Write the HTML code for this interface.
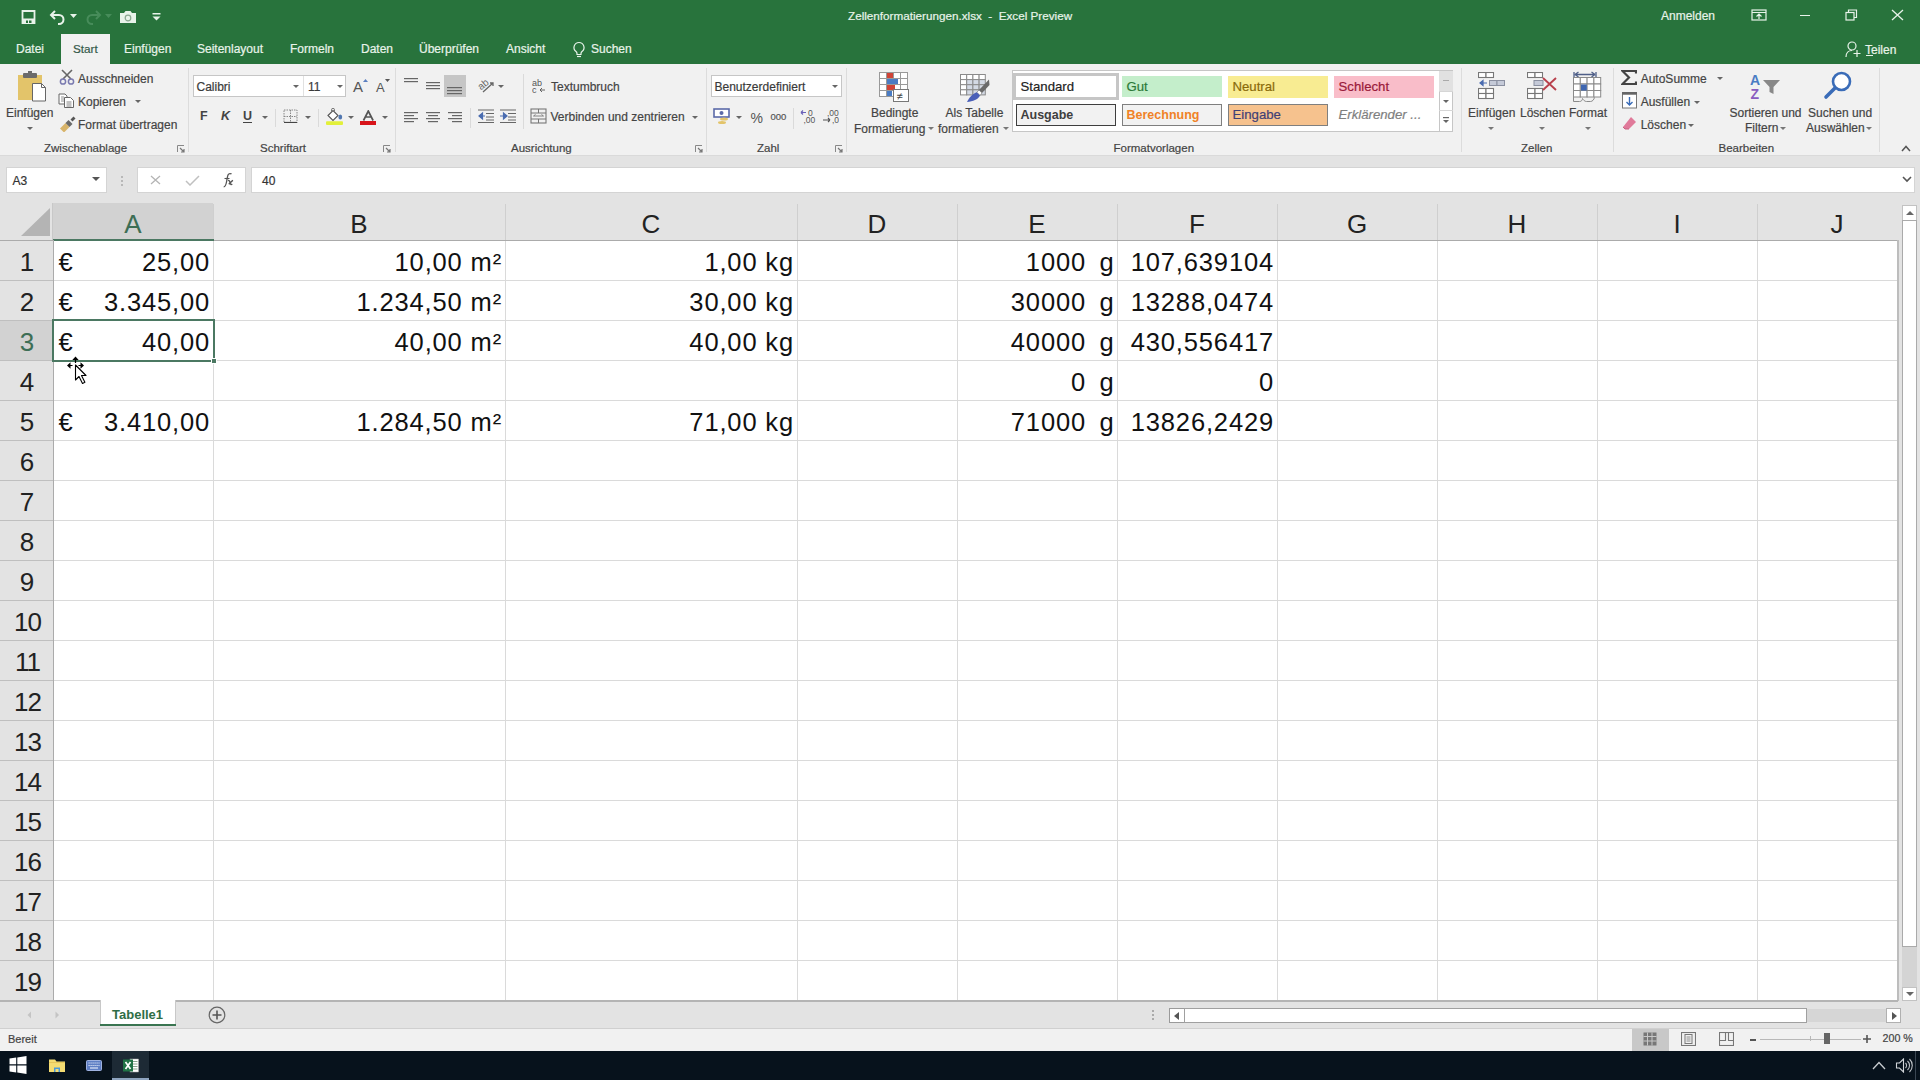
<!DOCTYPE html>
<html><head><meta charset="utf-8"><style>
html,body{margin:0;padding:0;width:1920px;height:1080px;overflow:hidden;background:#fff;}
body{position:relative;font-family:"Liberation Sans",sans-serif;}
body>div{position:absolute;white-space:pre;}
.u{-webkit-text-stroke:0.2px currentColor;}
</style></head><body>
<div style="left:0px;top:0px;width:1920px;height:64px;background:#28733c"></div>
<svg style="position:absolute;left:20px;top:9px;" width="17" height="16" viewBox="0 0 17 16"><path d="M2.5 2h12v12h-12z" fill="none" stroke="#e8f3ea" stroke-width="1.8"/><rect x="2.5" y="9.5" width="12" height="4.5" fill="#e8f3ea"/><rect x="6" y="11.5" width="2" height="2.5" fill="#28733c"/><rect x="9" y="11.5" width="2.5" height="2.5" fill="#28733c"/></svg>
<svg style="position:absolute;left:49px;top:9px;" width="18" height="17" viewBox="0 0 18 17"><path d="M3 6h7a4.5 4.5 0 0 1 0 9h-1" fill="none" stroke="#e8f3ea" stroke-width="2"/><path d="M6 2L2 6l4 4" fill="none" stroke="#e8f3ea" stroke-width="2"/></svg>
<svg style="position:absolute;left:70px;top:14px;" width="7" height="4" viewBox="0 0 7 4"><path d="M0 0h7L3.5 4z" fill="#e8f3ea"/></svg>
<svg style="position:absolute;left:85px;top:9px;" width="17" height="17" viewBox="0 0 17 17"><path d="M14 6H7a4.5 4.5 0 0 0 0 9h1" fill="none" stroke="#478c5a" stroke-width="2"/><path d="M11 2l4 4-4 4" fill="none" stroke="#478c5a" stroke-width="2"/></svg>
<svg style="position:absolute;left:105px;top:14px;" width="7" height="4" viewBox="0 0 7 4"><path d="M0 0h7L3.5 4z" fill="#478c5a"/></svg>
<svg style="position:absolute;left:119px;top:10px;" width="18" height="14" viewBox="0 0 18 14"><path d="M1 3h4l1.5-2h5L13 3h4v10H1z" fill="#e8f3ea"/><circle cx="9" cy="8" r="2.8" fill="none" stroke="#8aa890" stroke-width="1.2"/></svg>
<svg style="position:absolute;left:152px;top:13px;" width="9" height="8" viewBox="0 0 9 8"><rect x="0.5" y="0" width="8" height="1.5" fill="#e8f3ea"/><path d="M0.5 3.5h8L4.5 7.5z" fill="#e8f3ea"/></svg>
<div class="u" style="left:848.00px;top:10.10px;font-size:11.7px;line-height:11.7px;color:#e8f3ea;font-weight:400;">Zellenformatierungen.xlsx  -  Excel Preview</div>
<div class="u" style="left:1661.00px;top:9.54px;font-size:12px;line-height:12px;color:#e8f3ea;font-weight:400;">Anmelden</div>
<svg style="position:absolute;left:1751px;top:9px;" width="16" height="12" viewBox="0 0 16 12"><rect x="1" y="1" width="14" height="10" fill="none" stroke="#e8f3ea" stroke-width="1.2"/><path d="M1 3.5h14" stroke="#e8f3ea" stroke-width="1"/><path d="M8 10V5M5.5 7.5L8 5l2.5 2.5" fill="none" stroke="#e8f3ea" stroke-width="1.2"/></svg>
<div style="left:1800px;top:15px;width:10px;height:1.3px;background:#e8f3ea"></div>
<svg style="position:absolute;left:1845px;top:9px;" width="13" height="12" viewBox="0 0 13 12"><rect x="1" y="3.5" width="8" height="7.5" fill="none" stroke="#e8f3ea" stroke-width="1.2"/><path d="M3.5 3.5V1h8v7.5H9" fill="none" stroke="#e8f3ea" stroke-width="1.2"/></svg>
<svg style="position:absolute;left:1891px;top:9px;" width="13" height="12" viewBox="0 0 13 12"><path d="M1 1l11 10M12 1L1 11" stroke="#e8f3ea" stroke-width="1.3"/></svg>
<div style="left:61px;top:34px;width:49px;height:30px;background:#f1f1f1"></div>
<div class="u" style="left:16.00px;top:42.84px;font-size:12px;line-height:12px;color:#e8f3ea;font-weight:400;">Datei</div>
<div class="u" style="left:73.00px;top:43.10px;font-size:11.7px;line-height:11.7px;color:#34594a;font-weight:400;">Start</div>
<div class="u" style="left:124.00px;top:42.84px;font-size:12px;line-height:12px;color:#e8f3ea;font-weight:400;">Einfügen</div>
<div class="u" style="left:197.00px;top:42.84px;font-size:12px;line-height:12px;color:#e8f3ea;font-weight:400;">Seitenlayout</div>
<div class="u" style="left:290.00px;top:42.84px;font-size:12px;line-height:12px;color:#e8f3ea;font-weight:400;">Formeln</div>
<div class="u" style="left:361.00px;top:42.84px;font-size:12px;line-height:12px;color:#e8f3ea;font-weight:400;">Daten</div>
<div class="u" style="left:419.00px;top:42.84px;font-size:12px;line-height:12px;color:#e8f3ea;font-weight:400;">Überprüfen</div>
<div class="u" style="left:506.00px;top:42.84px;font-size:12px;line-height:12px;color:#e8f3ea;font-weight:400;">Ansicht</div>
<div class="u" style="left:591.00px;top:42.84px;font-size:12px;line-height:12px;color:#e8f3ea;font-weight:400;">Suchen</div>
<svg style="position:absolute;left:572px;top:41px;" width="14" height="17" viewBox="0 0 14 17"><path d="M7 1.5a5 5 0 0 0-3 9c.6.5 1 1.3 1 2v1h4v-1c0-.7.4-1.5 1-2a5 5 0 0 0-3-9z" fill="none" stroke="#e8f3ea" stroke-width="1.2"/><path d="M5 15.5h4" stroke="#e8f3ea" stroke-width="1.2"/></svg>
<svg style="position:absolute;left:1845px;top:41px;" width="17" height="17" viewBox="0 0 17 17"><circle cx="7" cy="5" r="4" fill="none" stroke="#e8f3ea" stroke-width="1.2"/><path d="M1 16c0-4 2.5-6.5 6-6.5" fill="none" stroke="#e8f3ea" stroke-width="1.2"/><path d="M12 9v7M8.5 12.5h7" stroke="#e8f3ea" stroke-width="1.2"/></svg>
<div class="u" style="left:1865.00px;top:43.54px;font-size:12px;line-height:12px;color:#e8f3ea;font-weight:400;">Teilen</div>
<div style="left:1866px;top:55px;width:7px;height:1px;background:#e8f3ea"></div>
<div style="left:0px;top:64px;width:1920px;height:92px;background:#f1f1f1"></div>
<div style="left:188px;top:68px;width:1px;height:84px;background:#dcdcdc"></div>
<div style="left:395px;top:68px;width:1px;height:84px;background:#dcdcdc"></div>
<div style="left:706px;top:68px;width:1px;height:84px;background:#dcdcdc"></div>
<div style="left:846px;top:68px;width:1px;height:84px;background:#dcdcdc"></div>
<div style="left:1461px;top:68px;width:1px;height:84px;background:#dcdcdc"></div>
<div style="left:1613px;top:68px;width:1px;height:84px;background:#dcdcdc"></div>
<div style="left:1879px;top:68px;width:1px;height:84px;background:#dcdcdc"></div>
<svg style="position:absolute;left:16px;top:71px;" width="31" height="32" viewBox="0 0 31 32"><rect x="2" y="4" width="24" height="25" fill="#e3c46a"/><rect x="7" y="2" width="14" height="5" rx="1" fill="#6b6b6b"/><rect x="12" y="0" width="4" height="3" fill="#6b6b6b"/><path d="M16.5 12.5h9l4 4v13.5h-13z" fill="#fff" stroke="#666" stroke-width="1"/><path d="M25.5 12.5v4h4" fill="none" stroke="#666" stroke-width="1"/></svg>
<div class="u" style="left:6.00px;top:106.84px;font-size:12px;line-height:12px;color:#444444;font-weight:400;">Einfügen</div>
<svg style="position:absolute;left:26.5px;top:126.5px;" width="6" height="3.0" viewBox="0 0 6 3.0"><path d="M0 0h6L3.0 3.0z" fill="#666"/></svg>
<svg style="position:absolute;left:59px;top:69px;" width="16" height="16" viewBox="0 0 16 16"><path d="M3 1l9 9M13 1L4 10" stroke="#666" stroke-width="1.6"/><circle cx="4" cy="12.5" r="2.6" fill="none" stroke="#7a7ab0" stroke-width="1.5"/><circle cx="12" cy="12.5" r="2.6" fill="none" stroke="#7a7ab0" stroke-width="1.5"/></svg>
<div class="u" style="left:78.00px;top:73.14px;font-size:12px;line-height:12px;color:#444444;font-weight:400;">Ausschneiden</div>
<svg style="position:absolute;left:58px;top:93px;" width="17" height="15" viewBox="0 0 17 15"><path d="M1 1h6l2 2v8H1z" fill="#fff" stroke="#666" stroke-width="1"/><path d="M3 4h3M3 6h4M3 8h4" stroke="#777" stroke-width="0.8"/><path d="M6.5 4.5h6l3 3v7h-9z" fill="#fff" stroke="#666" stroke-width="1"/><path d="M8.5 9h5M8.5 11h5M8.5 13h5" stroke="#777" stroke-width="0.9"/></svg>
<div class="u" style="left:78.00px;top:95.54px;font-size:12px;line-height:12px;color:#444444;font-weight:400;">Kopieren</div>
<svg style="position:absolute;left:134.5px;top:100.0px;" width="6" height="3.0" viewBox="0 0 6 3.0"><path d="M0 0h6L3.0 3.0z" fill="#666"/></svg>
<svg style="position:absolute;left:59px;top:116px;" width="17" height="16" viewBox="0 0 17 16"><path d="M1 12.5L6.5 7l4 4L5 16.5z" fill="#d8b46a"/><path d="M6.5 7l3-3 4 4-3 3z" fill="#6a6a6a"/><path d="M11.5 3.5l3-3 2 2-3 3z" fill="#555"/></svg>
<div class="u" style="left:78.00px;top:118.84px;font-size:12px;line-height:12px;color:#444444;font-weight:400;">Format übertragen</div>
<div class="u" style="left:44.00px;top:142.97px;font-size:11.5px;line-height:11.5px;color:#444444;font-weight:400;">Zwischenablage</div>
<svg style="position:absolute;left:177px;top:145px;" width="8" height="8" viewBox="0 0 8 8"><path d="M0.5 7V0.5H7" fill="none" stroke="#888" stroke-width="1"/><path d="M3 3l4 4M7 4v3H4" fill="none" stroke="#777" stroke-width="1.2"/></svg>
<div style="left:193px;top:75px;width:153px;height:22px;background:#fff;border:1px solid #c6c6c6;box-sizing:border-box"></div>
<div style="left:303px;top:76px;width:1px;height:20px;background:#e1e1e1"></div>
<div class="u" style="left:196.50px;top:80.84px;font-size:12px;line-height:12px;color:#3a3a3a;font-weight:400;">Calibri</div>
<svg style="position:absolute;left:293.0px;top:85.0px;" width="6" height="3.0" viewBox="0 0 6 3.0"><path d="M0 0h6L3.0 3.0z" fill="#666"/></svg>
<div class="u" style="left:308.00px;top:80.84px;font-size:12px;line-height:12px;color:#3a3a3a;font-weight:400;">11</div>
<svg style="position:absolute;left:336.5px;top:85.0px;" width="6" height="3.0" viewBox="0 0 6 3.0"><path d="M0 0h6L3.0 3.0z" fill="#666"/></svg>
<svg style="position:absolute;left:352px;top:78px;" width="16" height="15" viewBox="0 0 16 15"><text x="1" y="14" font-family="Liberation Sans" font-size="15" fill="#555">A</text><path d="M11 4l2.5-3 2.5 3z" fill="#5b7fc0"/></svg>
<svg style="position:absolute;left:375px;top:78px;" width="15" height="15" viewBox="0 0 15 15"><text x="1" y="14" font-family="Liberation Sans" font-size="13" fill="#555">A</text><path d="M10 1h5l-2.5 3z" fill="#555"/></svg>
<div style="left:200.00px;top:110.42px;font-size:12.5px;line-height:12.5px;color:#444;font-weight:700;">F</div>
<div style="left:221.00px;top:110.42px;font-size:12.5px;line-height:12.5px;color:#444;font-weight:700;font-style:italic">K</div>
<div style="left:243.00px;top:110.42px;font-size:12.5px;line-height:12.5px;color:#444;font-weight:700;">U</div>
<div style="left:243px;top:122px;width:9px;height:1.2px;background:#444"></div>
<svg style="position:absolute;left:261.5px;top:116.0px;" width="6" height="3.0" viewBox="0 0 6 3.0"><path d="M0 0h6L3.0 3.0z" fill="#666"/></svg>
<div style="left:275px;top:109px;width:1px;height:18px;background:#dadada"></div>
<svg style="position:absolute;left:283px;top:109px;" width="15" height="14" viewBox="0 0 15 14"><path d="M1 1h13v13H1zM7.5 1v13M1 7.5h13" fill="none" stroke="#888" stroke-width="1" stroke-dasharray="1.5 1"/><path d="M1 13.5h13" stroke="#444" stroke-width="1.2"/></svg>
<svg style="position:absolute;left:304.5px;top:116.0px;" width="6" height="3.0" viewBox="0 0 6 3.0"><path d="M0 0h6L3.0 3.0z" fill="#666"/></svg>
<div style="left:318px;top:109px;width:1px;height:18px;background:#dadada"></div>
<svg style="position:absolute;left:324px;top:108px;" width="20" height="18" viewBox="0 0 20 18"><path d="M4 7.5L9 2.5l5 5-5 5z" fill="#fff" stroke="#555" stroke-width="1.1"/><path d="M7.5 4V1.8a1.5 1.5 0 0 1 3 0V4" fill="none" stroke="#777" stroke-width="1"/><ellipse cx="16.3" cy="9" rx="1.9" ry="2.6" fill="#5177b0"/><rect x="2" y="13.3" width="17" height="3.7" rx="1" fill="#e2f03a"/></svg>
<svg style="position:absolute;left:347.5px;top:116.0px;" width="6" height="3.0" viewBox="0 0 6 3.0"><path d="M0 0h6L3.0 3.0z" fill="#666"/></svg>
<svg style="position:absolute;left:362px;top:110px;" width="13" height="11" viewBox="0 0 13 11"><path d="M1.5 10.5L6.3 1l4.8 9.5M3.3 7h6" fill="none" stroke="#555" stroke-width="1.7"/></svg>
<div style="left:360px;top:121px;width:16px;height:4px;background:#d8141a"></div>
<svg style="position:absolute;left:381.5px;top:116.0px;" width="6" height="3.0" viewBox="0 0 6 3.0"><path d="M0 0h6L3.0 3.0z" fill="#666"/></svg>
<div class="u" style="left:260.00px;top:143.47px;font-size:11.5px;line-height:11.5px;color:#444444;font-weight:400;">Schriftart</div>
<svg style="position:absolute;left:383px;top:145px;" width="8" height="8" viewBox="0 0 8 8"><path d="M0.5 7V0.5H7" fill="none" stroke="#888" stroke-width="1"/><path d="M3 3l4 4M7 4v3H4" fill="none" stroke="#777" stroke-width="1.2"/></svg>
<svg style="position:absolute;left:404px;top:78px;" width="14" height="9" viewBox="0 0 14 9"><rect x="0" y="0" width="14" height="1.2" fill="#666"/><rect x="0" y="3" width="14" height="1.2" fill="#666"/><rect x="0" y="6" width="0" height="1.2" fill="#666"/></svg>
<svg style="position:absolute;left:426px;top:82px;" width="14" height="9" viewBox="0 0 14 9"><rect x="0" y="0" width="14" height="1.2" fill="#666"/><rect x="0" y="3" width="14" height="1.2" fill="#666"/><rect x="0" y="6" width="14" height="1.2" fill="#666"/></svg>
<div style="left:444px;top:75px;width:22px;height:22px;background:#c6c6c6"></div>
<svg style="position:absolute;left:447px;top:87px;" width="15" height="9" viewBox="0 0 15 9"><rect x="0" y="0" width="15" height="1.2" fill="#666"/><rect x="0" y="3" width="15" height="1.2" fill="#666"/><rect x="0" y="6" width="15" height="1.2" fill="#666"/></svg>
<svg style="position:absolute;left:477px;top:77px;" width="18" height="16" viewBox="0 0 18 16"><text x="1" y="11" font-family="Liberation Sans" font-size="10" fill="#666" transform="rotate(-40 6 8)">ab</text><path d="M6 15l10-9M13 6h3v3" fill="none" stroke="#666" stroke-width="1.3"/></svg>
<svg style="position:absolute;left:498.0px;top:84.5px;" width="6" height="3.0" viewBox="0 0 6 3.0"><path d="M0 0h6L3.0 3.0z" fill="#666"/></svg>
<div style="left:523px;top:74px;width:1px;height:55px;background:#dadada"></div>
<svg style="position:absolute;left:532px;top:78px;" width="15" height="16" viewBox="0 0 15 16"><text x="0" y="8" font-family="Liberation Sans" font-size="9" fill="#555">ab</text><text x="0" y="15" font-family="Liberation Sans" font-size="9" fill="#555">c</text><path d="M8 12h5M8 12l2-2M8 12l2 2" fill="none" stroke="#555" stroke-width="0.9"/></svg>
<div class="u" style="left:551.00px;top:80.54px;font-size:12px;line-height:12px;color:#444444;font-weight:400;">Textumbruch</div>
<svg style="position:absolute;left:404px;top:112px;" width="14" height="12" viewBox="0 0 14 12"><rect x="0" y="0" width="14" height="1.2" fill="#666"/><rect x="0" y="3" width="10" height="1.2" fill="#666"/><rect x="0" y="6" width="14" height="1.2" fill="#666"/><rect x="0" y="9" width="10" height="1.2" fill="#666"/></svg>
<svg style="position:absolute;left:426px;top:112px;" width="14" height="12" viewBox="0 0 14 12"><rect x="0" y="0" width="14" height="1.2" fill="#666"/><rect x="2" y="3" width="10" height="1.2" fill="#666"/><rect x="0" y="6" width="14" height="1.2" fill="#666"/><rect x="2" y="9" width="10" height="1.2" fill="#666"/></svg>
<svg style="position:absolute;left:448px;top:112px;" width="14" height="12" viewBox="0 0 14 12"><rect x="0" y="0" width="14" height="1.2" fill="#666"/><rect x="4" y="3" width="10" height="1.2" fill="#666"/><rect x="0" y="6" width="14" height="1.2" fill="#666"/><rect x="4" y="9" width="10" height="1.2" fill="#666"/></svg>
<div style="left:470px;top:108px;width:1px;height:20px;background:#dadada"></div>
<svg style="position:absolute;left:478px;top:109px;" width="17" height="14" viewBox="0 0 17 14"><path d="M0 1h16M8 4.5h8M8 8h8M8 11h8M0 13.5h16" stroke="#666" stroke-width="1"/><path d="M1 7h6M1 7l3.5-3v6z" fill="#4a6cb0" stroke="#4a6cb0" stroke-width="1.2"/></svg>
<svg style="position:absolute;left:500px;top:109px;" width="17" height="14" viewBox="0 0 17 14"><path d="M0 1h16M8 4.5h8M8 8h8M8 11h8M0 13.5h16" stroke="#666" stroke-width="1"/><path d="M0 7h5M7 7l-3.5-3v6z" fill="#4a6cb0" stroke="#4a6cb0" stroke-width="1.2"/></svg>
<svg style="position:absolute;left:530px;top:108px;" width="17" height="16" viewBox="0 0 17 16"><rect x="1" y="1" width="15" height="14" fill="none" stroke="#777" stroke-width="1.1"/><path d="M1 5h15M1 11h15M8.5 1v4M8.5 11v4" stroke="#777" stroke-width="1"/><path d="M3.5 8h10M3.5 8l2-1.5M13.5 8l-2-1.5" fill="none" stroke="#777" stroke-width="0.9"/></svg>
<div class="u" style="left:550.50px;top:111.34px;font-size:12px;line-height:12px;color:#444444;font-weight:400;">Verbinden und zentrieren</div>
<svg style="position:absolute;left:691.5px;top:116.0px;" width="6" height="3.0" viewBox="0 0 6 3.0"><path d="M0 0h6L3.0 3.0z" fill="#666"/></svg>
<div class="u" style="left:511.00px;top:143.47px;font-size:11.5px;line-height:11.5px;color:#444444;font-weight:400;">Ausrichtung</div>
<svg style="position:absolute;left:695px;top:145px;" width="8" height="8" viewBox="0 0 8 8"><path d="M0.5 7V0.5H7" fill="none" stroke="#888" stroke-width="1"/><path d="M3 3l4 4M7 4v3H4" fill="none" stroke="#777" stroke-width="1.2"/></svg>
<div style="left:711px;top:75px;width:131px;height:22px;background:#fff;border:1px solid #c6c6c6;box-sizing:border-box"></div>
<div class="u" style="left:714.50px;top:80.54px;font-size:12px;line-height:12px;color:#3a3a3a;font-weight:400;">Benutzerdefiniert</div>
<svg style="position:absolute;left:831.5px;top:84.5px;" width="6" height="3.0" viewBox="0 0 6 3.0"><path d="M0 0h6L3.0 3.0z" fill="#666"/></svg>
<svg style="position:absolute;left:713px;top:108px;" width="19" height="17" viewBox="0 0 19 17"><rect x="1" y="1" width="15" height="8" fill="#fff" stroke="#5b6aa8" stroke-width="1.6"/><circle cx="8.5" cy="5" r="2" fill="#5b6aa8"/><ellipse cx="11" cy="11" rx="4" ry="1.5" fill="#e3c46a"/><ellipse cx="9" cy="14.5" rx="4" ry="1.5" fill="#e3c46a"/></svg>
<svg style="position:absolute;left:735.5px;top:116.0px;" width="6" height="3.0" viewBox="0 0 6 3.0"><path d="M0 0h6L3.0 3.0z" fill="#666"/></svg>
<div style="left:750.50px;top:110.65px;font-size:14px;line-height:14px;color:#555;font-weight:400;">%</div>
<div class="u" style="left:770.50px;top:112.16px;font-size:9.5px;line-height:9.5px;color:#555;font-weight:400;">000</div>
<div style="left:793px;top:108px;width:1px;height:21px;background:#dadada"></div>
<svg style="position:absolute;left:800px;top:108px;" width="17" height="17" viewBox="0 0 17 17"><text x="8" y="8" font-family="Liberation Sans" font-size="8.5" fill="#555">0</text><text x="3.5" y="15" font-family="Liberation Sans" font-size="8.5" fill="#555">,00</text><path d="M1 4.5h5M1 4.5l2-2M1 4.5l2 2" stroke="#6a60b8" stroke-width="1.2" fill="none"/></svg>
<svg style="position:absolute;left:822px;top:108px;" width="17" height="17" viewBox="0 0 17 17"><text x="5" y="8" font-family="Liberation Sans" font-size="8.5" fill="#555">,00</text><text x="10" y="15" font-family="Liberation Sans" font-size="8.5" fill="#555">,0</text><path d="M1 12h7M8 12l-2-2M8 12l-2 2" stroke="#555" stroke-width="1.1" fill="none"/></svg>
<div class="u" style="left:757.00px;top:143.07px;font-size:11.5px;line-height:11.5px;color:#444444;font-weight:400;">Zahl</div>
<svg style="position:absolute;left:835px;top:145px;" width="8" height="8" viewBox="0 0 8 8"><path d="M0.5 7V0.5H7" fill="none" stroke="#888" stroke-width="1"/><path d="M3 3l4 4M7 4v3H4" fill="none" stroke="#777" stroke-width="1.2"/></svg>
<svg style="position:absolute;left:879px;top:72px;" width="31" height="31" viewBox="0 0 31 31"><g stroke="#999" stroke-width="1" fill="#fff"><rect x="0.5" y="0.5" width="7" height="6"/><rect x="7.5" y="0.5" width="7" height="6"/><rect x="14.5" y="0.5" width="7" height="6"/><rect x="21.5" y="0.5" width="7" height="6"/><rect x="0.5" y="6.5" width="7" height="6"/><rect x="7.5" y="6.5" width="7" height="6"/><rect x="14.5" y="6.5" width="7" height="6"/><rect x="21.5" y="6.5" width="7" height="6"/><rect x="0.5" y="12.5" width="7" height="6"/><rect x="7.5" y="12.5" width="7" height="6"/><rect x="14.5" y="12.5" width="7" height="6"/><rect x="21.5" y="12.5" width="7" height="6"/><rect x="0.5" y="18.5" width="7" height="6"/><rect x="7.5" y="18.5" width="7" height="6"/><rect x="14.5" y="18.5" width="7" height="6"/><rect x="21.5" y="18.5" width="7" height="6"/></g><rect x="8" y="1" width="6" height="5" fill="#d04437"/><rect x="8" y="7" width="11" height="5" fill="#4a7cc4"/><rect x="8" y="13" width="8" height="5" fill="#d04437"/><rect x="8" y="19" width="5" height="5" fill="#4a7cc4"/><rect x="14.5" y="17.5" width="15" height="12" fill="#fff" stroke="#777" stroke-width="1"/><text x="17.5" y="28" font-family="Liberation Sans" font-size="11" fill="#444">≠</text></svg>
<div class="u" style="left:871.00px;top:106.84px;font-size:12px;line-height:12px;color:#444444;font-weight:400;">Bedingte</div>
<div class="u" style="left:854.00px;top:122.84px;font-size:12px;line-height:12px;color:#444444;font-weight:400;">Formatierung</div>
<svg style="position:absolute;left:928.0px;top:127.0px;" width="6" height="3.0" viewBox="0 0 6 3.0"><path d="M0 0h6L3.0 3.0z" fill="#777"/></svg>
<svg style="position:absolute;left:958px;top:72px;" width="34" height="32" viewBox="0 0 34 32"><g stroke="#8a8a8a" stroke-width="1"><rect x="2.5" y="2.5" width="6.2" height="5.1" fill="#fff"/><rect x="8.7" y="2.5" width="6.2" height="5.1" fill="#fff"/><rect x="14.9" y="2.5" width="6.2" height="5.1" fill="#fff"/><rect x="21.1" y="2.5" width="6.2" height="5.1" fill="#fff"/><rect x="2.5" y="7.6" width="6.2" height="5.1" fill="#fff"/><rect x="8.7" y="7.6" width="6.2" height="5.1" fill="#d3d9e4"/><rect x="14.9" y="7.6" width="6.2" height="5.1" fill="#d3d9e4"/><rect x="21.1" y="7.6" width="6.2" height="5.1" fill="#d3d9e4"/><rect x="2.5" y="12.7" width="6.2" height="5.1" fill="#fff"/><rect x="8.7" y="12.7" width="6.2" height="5.1" fill="#d3d9e4"/><rect x="14.9" y="12.7" width="6.2" height="5.1" fill="#d3d9e4"/><rect x="21.1" y="12.7" width="6.2" height="5.1" fill="#d3d9e4"/><rect x="2.5" y="17.799999999999997" width="6.2" height="5.1" fill="#fff"/><rect x="8.7" y="17.799999999999997" width="6.2" height="5.1" fill="#d3d9e4"/><rect x="14.9" y="17.799999999999997" width="6.2" height="5.1" fill="#d3d9e4"/><rect x="21.1" y="17.799999999999997" width="6.2" height="5.1" fill="#d3d9e4"/></g><path d="M31 7.5L31.5 13 24 21 21 18z" fill="#6a6a6a"/><path d="M21 18L24 21 22 23.5 18.8 20.3z" fill="#fff" stroke="#888" stroke-width="0.8"/><path d="M18.8 20.3L22 23.5C20 27.5 15 29.5 9 30 11 26 14 22 18.8 20.3z" fill="#4a5fb8"/></svg>
<div class="u" style="left:945.50px;top:106.84px;font-size:12px;line-height:12px;color:#444444;font-weight:400;">Als Tabelle</div>
<div class="u" style="left:938.00px;top:122.84px;font-size:12px;line-height:12px;color:#444444;font-weight:400;">formatieren</div>
<svg style="position:absolute;left:1003.0px;top:127.0px;" width="6" height="3.0" viewBox="0 0 6 3.0"><path d="M0 0h6L3.0 3.0z" fill="#777"/></svg>
<div style="left:1012px;top:70px;width:441px;height:62px;background:#fff;border:1px solid #c6c6c6;box-sizing:border-box"></div>
<div style="left:1013px;top:73px;width:106px;height:27px;background:#fff;border:3px solid #c6c6c6;box-sizing:border-box"></div>
<div class="u" style="left:1020.50px;top:80.43px;font-size:13.2px;line-height:13.2px;color:#222;font-weight:400;">Standard</div>
<div style="left:1122px;top:76px;width:100px;height:21px;background:#c4eecb"></div>
<div class="u" style="left:1126.50px;top:80.43px;font-size:13.2px;line-height:13.2px;color:#2c7a38;font-weight:400;">Gut</div>
<div style="left:1228px;top:76px;width:100px;height:21.5px;background:#f8ec92"></div>
<div class="u" style="left:1232.50px;top:80.43px;font-size:13.2px;line-height:13.2px;color:#8a6a0a;font-weight:400;">Neutral</div>
<div style="left:1334px;top:76px;width:100px;height:21.5px;background:#f9bdc9"></div>
<div class="u" style="left:1338.50px;top:80.43px;font-size:13.2px;line-height:13.2px;color:#9a1a3a;font-weight:400;">Schlecht</div>
<div style="left:1016px;top:104px;width:100px;height:22px;background:#f2f2f2;border:1.5px solid #3f3f3f;box-sizing:border-box"></div>
<div style="left:1020.50px;top:108.92px;font-size:12.5px;line-height:12.5px;color:#3f3f3f;font-weight:700;">Ausgabe</div>
<div style="left:1122px;top:104px;width:100px;height:22px;background:#f2f2f2;border:1px solid #7f7f7f;box-sizing:border-box"></div>
<div style="left:1126.50px;top:108.92px;font-size:12.5px;line-height:12.5px;color:#f08226;font-weight:700;">Berechnung</div>
<div style="left:1228px;top:104px;width:100px;height:22px;background:#f6c28e;border:1px solid #7f7f7f;box-sizing:border-box"></div>
<div class="u" style="left:1232.50px;top:108.33px;font-size:13.2px;line-height:13.2px;color:#3f3f76;font-weight:400;">Eingabe</div>
<div class="u" style="left:1338.50px;top:108.33px;font-size:13.2px;line-height:13.2px;color:#7f7f7f;font-weight:400;font-style:italic">Erklärender ...</div>
<div style="left:1439px;top:70px;width:14px;height:62px;background:#fff;border:1px solid #c6c6c6;box-sizing:border-box"></div>
<div style="left:1439px;top:71px;width:14px;height:20px;background:#e1e1e1"></div>
<div style="left:1439px;top:91px;width:14px;height:1px;background:#d6d6d6"></div>
<div style="left:1439px;top:110px;width:14px;height:1px;background:#d6d6d6"></div>
<svg style="position:absolute;left:1443px;top:80px;" width="6" height="2" viewBox="0 0 6 2"><rect width="6" height="1" fill="#aaa"/></svg>
<svg style="position:absolute;left:1443.0px;top:100.0px;" width="6" height="3.0" viewBox="0 0 6 3.0"><path d="M0 0h6L3.0 3.0z" fill="#666"/></svg>
<svg style="position:absolute;left:1443px;top:117px;" width="6" height="7" viewBox="0 0 6 7"><rect width="6" height="1.2" fill="#666"/><path d="M0 3h6L3 6z" fill="#666"/></svg>
<div class="u" style="left:1113.50px;top:143.47px;font-size:11.5px;line-height:11.5px;color:#444444;font-weight:400;">Formatvorlagen</div>
<svg style="position:absolute;left:1478px;top:72px;" width="28" height="28" viewBox="0 0 28 28"><g fill="#fff" stroke="#777" stroke-width="1.1"><rect x="0.5" y="0.5" width="7.5" height="5"/><rect x="8" y="0.5" width="7.5" height="5"/><rect x="0.5" y="16.5" width="7.5" height="5"/><rect x="8" y="16.5" width="7.5" height="5"/><rect x="0.5" y="21.5" width="7.5" height="5"/><rect x="8" y="21.5" width="7.5" height="5"/></g><g fill="#c5cad8" stroke="#8a8fa0" stroke-width="1"><rect x="11.5" y="8.5" width="7.5" height="5"/><rect x="19" y="8.5" width="7.5" height="5"/></g><path d="M2 11h7M2 11l3-2.5v5z" fill="#4a6cb0" stroke="#4a6cb0" stroke-width="1.2"/></svg>
<svg style="position:absolute;left:1527px;top:72px;" width="31" height="29" viewBox="0 0 31 29"><g fill="#fff" stroke="#777" stroke-width="1.1"><rect x="0.5" y="0.5" width="7.5" height="5"/><rect x="8" y="0.5" width="7.5" height="5"/><rect x="0.5" y="16.5" width="7.5" height="5"/><rect x="8" y="16.5" width="7.5" height="5"/><rect x="0.5" y="21.5" width="7.5" height="5"/><rect x="8" y="21.5" width="7.5" height="5"/></g><g fill="#c5cad8" stroke="#8a8fa0" stroke-width="1"><rect x="7" y="8.5" width="9" height="5"/></g><path d="M16 6l13 12M29 6L16 18" stroke="#b8404c" stroke-width="1.9"/></svg>
<svg style="position:absolute;left:1573px;top:71px;" width="30" height="31" viewBox="0 0 30 31"><path d="M1 1v5M23 1v5M2 3.5h20M2 3.5l3.5-2.5M2 3.5l3.5 2.5M22 3.5l-3.5-2.5M22 3.5l-3.5 2.5" fill="none" stroke="#4f5f88" stroke-width="1.3"/><g fill="#fff" stroke="#8a8a8a" stroke-width="1"><rect x="0.5" y="6.5" width="6.8" height="6.5"/><rect x="7.3" y="6.5" width="6.8" height="6.5"/><rect x="14.1" y="6.5" width="6.8" height="6.5"/><rect x="20.9" y="6.5" width="6.8" height="6.5"/><rect x="0.5" y="13.0" width="6.8" height="6.5"/><rect x="7.3" y="13.0" width="6.8" height="6.5"/><rect x="14.1" y="13.0" width="6.8" height="6.5"/><rect x="20.9" y="13.0" width="6.8" height="6.5"/><rect x="0.5" y="19.5" width="6.8" height="6.5"/><rect x="7.3" y="19.5" width="6.8" height="6.5"/><rect x="14.1" y="19.5" width="6.8" height="6.5"/><rect x="20.9" y="19.5" width="6.8" height="6.5"/></g><rect x="8" y="13.5" width="5.8" height="6" fill="#3f66b0"/><path d="M0.5 26v4.5h6c2 0 3-1.5 3-3 1 1.5 2 3 4 3h4c2 0 3.5-2 4-4" fill="none" stroke="#8a8a8a" stroke-width="1"/></svg>
<div class="u" style="left:1468.00px;top:106.84px;font-size:12px;line-height:12px;color:#444444;font-weight:400;">Einfügen</div>
<div class="u" style="left:1520.00px;top:106.84px;font-size:12px;line-height:12px;color:#444444;font-weight:400;">Löschen</div>
<div class="u" style="left:1569.00px;top:106.84px;font-size:12px;line-height:12px;color:#444444;font-weight:400;">Format</div>
<svg style="position:absolute;left:1488.0px;top:127.0px;" width="6" height="3.0" viewBox="0 0 6 3.0"><path d="M0 0h6L3.0 3.0z" fill="#777"/></svg>
<svg style="position:absolute;left:1538.7px;top:127.0px;" width="6" height="3.0" viewBox="0 0 6 3.0"><path d="M0 0h6L3.0 3.0z" fill="#777"/></svg>
<svg style="position:absolute;left:1585.0px;top:127.0px;" width="6" height="3.0" viewBox="0 0 6 3.0"><path d="M0 0h6L3.0 3.0z" fill="#777"/></svg>
<div class="u" style="left:1521.00px;top:142.57px;font-size:11.5px;line-height:11.5px;color:#444444;font-weight:400;">Zellen</div>
<svg style="position:absolute;left:1621px;top:70px;" width="16" height="15" viewBox="0 0 16 15"><path d="M15 3.5V1H1.5l6.5 6.5L1.5 14H15v-2.5" fill="none" stroke="#444" stroke-width="2.2"/></svg>
<div class="u" style="left:1640.70px;top:73.24px;font-size:12px;line-height:12px;color:#444444;font-weight:400;">AutoSumme</div>
<svg style="position:absolute;left:1717.0px;top:77.0px;" width="6" height="3.0" viewBox="0 0 6 3.0"><path d="M0 0h6L3.0 3.0z" fill="#666"/></svg>
<svg style="position:absolute;left:1622px;top:92px;" width="15" height="17" viewBox="0 0 15 17"><rect x="0.5" y="2" width="14" height="14" fill="#fff" stroke="#777" stroke-width="1"/><rect x="0" y="0" width="15" height="2.5" fill="#666"/><path d="M7.5 5v8M4.5 10l3 3 3-3" fill="none" stroke="#3a6cb8" stroke-width="1.4"/></svg>
<div class="u" style="left:1640.70px;top:96.14px;font-size:12px;line-height:12px;color:#444444;font-weight:400;">Ausfüllen</div>
<svg style="position:absolute;left:1693.5px;top:100.5px;" width="6" height="3.0" viewBox="0 0 6 3.0"><path d="M0 0h6L3.0 3.0z" fill="#666"/></svg>
<svg style="position:absolute;left:1622px;top:116px;" width="15" height="15" viewBox="0 0 15 15"><path d="M9 1l5 5-7 7H3l-2-2z" fill="#e07a9a"/><path d="M1 11l2 2h4" stroke="#c96080" fill="none"/></svg>
<div class="u" style="left:1640.70px;top:119.24px;font-size:12px;line-height:12px;color:#444444;font-weight:400;">Löschen</div>
<svg style="position:absolute;left:1688.0px;top:123.5px;" width="6" height="3.0" viewBox="0 0 6 3.0"><path d="M0 0h6L3.0 3.0z" fill="#666"/></svg>
<svg style="position:absolute;left:1749px;top:72px;" width="32" height="28" viewBox="0 0 32 28"><text x="1" y="12.5" font-family="Liberation Sans" font-size="14" font-weight="bold" fill="#4a7cc4">A</text><text x="1.5" y="27" font-family="Liberation Sans" font-size="14" font-weight="bold" fill="#8a5cc0">Z</text><path d="M14 8h17l-6.5 7v7l-4-2v-5z" fill="#888"/></svg>
<svg style="position:absolute;left:1823px;top:71px;" width="30" height="29" viewBox="0 0 30 29"><circle cx="18.5" cy="10.5" r="8.5" fill="#fff" stroke="#3a6cb8" stroke-width="2.6"/><path d="M12 17L3 26" stroke="#3a6cb8" stroke-width="3.6" stroke-linecap="round"/></svg>
<div class="u" style="left:1729.50px;top:106.84px;font-size:12px;line-height:12px;color:#444444;font-weight:400;">Sortieren und</div>
<div class="u" style="left:1745.00px;top:122.44px;font-size:12px;line-height:12px;color:#444444;font-weight:400;">Filtern</div>
<svg style="position:absolute;left:1780.0px;top:127.0px;" width="6" height="3.0" viewBox="0 0 6 3.0"><path d="M0 0h6L3.0 3.0z" fill="#777"/></svg>
<div class="u" style="left:1808.00px;top:106.84px;font-size:12px;line-height:12px;color:#444444;font-weight:400;">Suchen und</div>
<div class="u" style="left:1806.00px;top:122.44px;font-size:12px;line-height:12px;color:#444444;font-weight:400;">Auswählen</div>
<svg style="position:absolute;left:1866.0px;top:127.0px;" width="6" height="3.0" viewBox="0 0 6 3.0"><path d="M0 0h6L3.0 3.0z" fill="#777"/></svg>
<div class="u" style="left:1718.50px;top:143.47px;font-size:11.5px;line-height:11.5px;color:#444444;font-weight:400;">Bearbeiten</div>
<svg style="position:absolute;left:1901px;top:145px;" width="10" height="7" viewBox="0 0 10 7"><path d="M1 6l4-4.5L9 6" fill="none" stroke="#555" stroke-width="1.5"/></svg>
<div style="left:0px;top:155px;width:1920px;height:1px;background:#dadada"></div>
<div style="left:0px;top:156px;width:1920px;height:48px;background:#e3e3e3"></div>
<div style="left:6px;top:167px;width:101px;height:26px;background:#fff;border:1px solid #d4d4d4;box-sizing:border-box"></div>
<div class="u" style="left:12.50px;top:174.54px;font-size:12px;line-height:12px;color:#333;font-weight:400;">A3</div>
<svg style="position:absolute;left:92px;top:177px;" width="8" height="4" viewBox="0 0 8 4"><path d="M0 0h8L4 4z" fill="#555"/></svg>
<div style="left:121px;top:176px;width:2px;height:2px;background:#aaa;border-radius:1px"></div>
<div style="left:121px;top:180px;width:2px;height:2px;background:#aaa;border-radius:1px"></div>
<div style="left:121px;top:184px;width:2px;height:2px;background:#aaa;border-radius:1px"></div>
<div style="left:137px;top:167px;width:109px;height:26px;background:#fff;border:1px solid #d4d4d4;box-sizing:border-box"></div>
<svg style="position:absolute;left:150px;top:175px;" width="11" height="10" viewBox="0 0 11 10"><path d="M1 1l9 8M10 1L1 9" stroke="#b4b4b4" stroke-width="1.3"/></svg>
<svg style="position:absolute;left:185px;top:175px;" width="15" height="11" viewBox="0 0 15 11"><path d="M1 6l4 4L14 1" fill="none" stroke="#c0c0c0" stroke-width="1.5"/></svg>
<svg style="position:absolute;left:219px;top:171px;" width="18" height="18" viewBox="0 0 18 18"><path d="M12.5 3.2c-.6-.9-2.6-1-3.4.6-.5 1-.9 3.4-1.6 7.2-.6 3.2-1.2 4.8-2.8 4.9" fill="none" stroke="#555" stroke-width="1.3"/><path d="M5.5 7.5h5" stroke="#555" stroke-width="1.1"/><path d="M9 9.5c1-.4 1.5.4 2 2.2.6 1.8 1 2.2 2.3 1.4M14 9.3c-1.2.6-2.8 2.6-4.2 3.9" fill="none" stroke="#555" stroke-width="1.3"/></svg>
<div style="left:251px;top:167px;width:1664px;height:26px;background:#fff;border:1px solid #d4d4d4;box-sizing:border-box"></div>
<div class="u" style="left:262.00px;top:174.54px;font-size:12px;line-height:12px;color:#333;font-weight:400;">40</div>
<svg style="position:absolute;left:1902px;top:176px;" width="10" height="7" viewBox="0 0 10 7"><path d="M1 1l4 4 4-4" fill="none" stroke="#555" stroke-width="1.6"/></svg>
<div style="left:0px;top:203px;width:1900px;height:37px;background:#e3e3e3"></div>
<div style="left:53px;top:203px;width:160px;height:37px;background:#d2d2d2"></div>
<svg style="position:absolute;left:20px;top:207px;" width="31" height="30" viewBox="0 0 31 30"><path d="M30 1V29H1z" fill="#b4b4b4"/></svg>
<div style="left:0px;top:240px;width:53px;height:761px;background:#e3e3e3"></div>
<div style="left:0px;top:320px;width:53px;height:40px;background:#d2d2d2"></div>
<div style="left:53px;top:240px;width:1845px;height:761px;background:#fff"></div>
<div style="left:213px;top:204px;width:1px;height:36px;background:#cfcfcf"></div>
<div style="left:505px;top:204px;width:1px;height:36px;background:#cfcfcf"></div>
<div style="left:797px;top:204px;width:1px;height:36px;background:#cfcfcf"></div>
<div style="left:957px;top:204px;width:1px;height:36px;background:#cfcfcf"></div>
<div style="left:1117px;top:204px;width:1px;height:36px;background:#cfcfcf"></div>
<div style="left:1277px;top:204px;width:1px;height:36px;background:#cfcfcf"></div>
<div style="left:1437px;top:204px;width:1px;height:36px;background:#cfcfcf"></div>
<div style="left:1597px;top:204px;width:1px;height:36px;background:#cfcfcf"></div>
<div style="left:1757px;top:204px;width:1px;height:36px;background:#cfcfcf"></div>
<div style="left:52px;top:203px;width:1px;height:37px;background:#c8c8c8"></div>
<div style="left:0px;top:240px;width:1898px;height:1px;background:#ababab"></div>
<div style="left:53px;top:239px;width:161px;height:2px;background:#4b7862"></div>
<div style="left:53px;top:280px;width:1845px;height:1px;background:#dadada"></div>
<div style="left:0px;top:280px;width:53px;height:1px;background:#bfbfbf"></div>
<div style="left:53px;top:320px;width:1845px;height:1px;background:#dadada"></div>
<div style="left:0px;top:320px;width:53px;height:1px;background:#bfbfbf"></div>
<div style="left:53px;top:360px;width:1845px;height:1px;background:#dadada"></div>
<div style="left:0px;top:360px;width:53px;height:1px;background:#bfbfbf"></div>
<div style="left:53px;top:400px;width:1845px;height:1px;background:#dadada"></div>
<div style="left:0px;top:400px;width:53px;height:1px;background:#bfbfbf"></div>
<div style="left:53px;top:440px;width:1845px;height:1px;background:#dadada"></div>
<div style="left:0px;top:440px;width:53px;height:1px;background:#bfbfbf"></div>
<div style="left:53px;top:480px;width:1845px;height:1px;background:#dadada"></div>
<div style="left:0px;top:480px;width:53px;height:1px;background:#bfbfbf"></div>
<div style="left:53px;top:520px;width:1845px;height:1px;background:#dadada"></div>
<div style="left:0px;top:520px;width:53px;height:1px;background:#bfbfbf"></div>
<div style="left:53px;top:560px;width:1845px;height:1px;background:#dadada"></div>
<div style="left:0px;top:560px;width:53px;height:1px;background:#bfbfbf"></div>
<div style="left:53px;top:600px;width:1845px;height:1px;background:#dadada"></div>
<div style="left:0px;top:600px;width:53px;height:1px;background:#bfbfbf"></div>
<div style="left:53px;top:640px;width:1845px;height:1px;background:#dadada"></div>
<div style="left:0px;top:640px;width:53px;height:1px;background:#bfbfbf"></div>
<div style="left:53px;top:680px;width:1845px;height:1px;background:#dadada"></div>
<div style="left:0px;top:680px;width:53px;height:1px;background:#bfbfbf"></div>
<div style="left:53px;top:720px;width:1845px;height:1px;background:#dadada"></div>
<div style="left:0px;top:720px;width:53px;height:1px;background:#bfbfbf"></div>
<div style="left:53px;top:760px;width:1845px;height:1px;background:#dadada"></div>
<div style="left:0px;top:760px;width:53px;height:1px;background:#bfbfbf"></div>
<div style="left:53px;top:800px;width:1845px;height:1px;background:#dadada"></div>
<div style="left:0px;top:800px;width:53px;height:1px;background:#bfbfbf"></div>
<div style="left:53px;top:840px;width:1845px;height:1px;background:#dadada"></div>
<div style="left:0px;top:840px;width:53px;height:1px;background:#bfbfbf"></div>
<div style="left:53px;top:880px;width:1845px;height:1px;background:#dadada"></div>
<div style="left:0px;top:880px;width:53px;height:1px;background:#bfbfbf"></div>
<div style="left:53px;top:920px;width:1845px;height:1px;background:#dadada"></div>
<div style="left:0px;top:920px;width:53px;height:1px;background:#bfbfbf"></div>
<div style="left:53px;top:960px;width:1845px;height:1px;background:#dadada"></div>
<div style="left:0px;top:960px;width:53px;height:1px;background:#bfbfbf"></div>
<div style="left:53px;top:1000px;width:1845px;height:1px;background:#dadada"></div>
<div style="left:0px;top:1000px;width:53px;height:1px;background:#bfbfbf"></div>
<div style="left:53px;top:240px;width:1px;height:761px;background:#ababab"></div>
<div style="left:213px;top:241px;width:1px;height:760px;background:#dadada"></div>
<div style="left:505px;top:241px;width:1px;height:760px;background:#dadada"></div>
<div style="left:797px;top:241px;width:1px;height:760px;background:#dadada"></div>
<div style="left:957px;top:241px;width:1px;height:760px;background:#dadada"></div>
<div style="left:1117px;top:241px;width:1px;height:760px;background:#dadada"></div>
<div style="left:1277px;top:241px;width:1px;height:760px;background:#dadada"></div>
<div style="left:1437px;top:241px;width:1px;height:760px;background:#dadada"></div>
<div style="left:1597px;top:241px;width:1px;height:760px;background:#dadada"></div>
<div style="left:1757px;top:241px;width:1px;height:760px;background:#dadada"></div>
<div style="left:1897px;top:240px;width:2px;height:761px;background:#bdbdbd"></div>
<div style="left:-367.00px;top:210.79px;font-size:26px;line-height:26px;color:#3d6e55;font-weight:400;width:1000px;text-align:center;">A</div>
<div style="left:-141.00px;top:210.79px;font-size:26px;line-height:26px;color:#222;font-weight:400;width:1000px;text-align:center;">B</div>
<div style="left:151.00px;top:210.79px;font-size:26px;line-height:26px;color:#222;font-weight:400;width:1000px;text-align:center;">C</div>
<div style="left:377.00px;top:210.79px;font-size:26px;line-height:26px;color:#222;font-weight:400;width:1000px;text-align:center;">D</div>
<div style="left:537.00px;top:210.79px;font-size:26px;line-height:26px;color:#222;font-weight:400;width:1000px;text-align:center;">E</div>
<div style="left:697.00px;top:210.79px;font-size:26px;line-height:26px;color:#222;font-weight:400;width:1000px;text-align:center;">F</div>
<div style="left:857.00px;top:210.79px;font-size:26px;line-height:26px;color:#222;font-weight:400;width:1000px;text-align:center;">G</div>
<div style="left:1017.00px;top:210.79px;font-size:26px;line-height:26px;color:#222;font-weight:400;width:1000px;text-align:center;">H</div>
<div style="left:1177.00px;top:210.79px;font-size:26px;line-height:26px;color:#222;font-weight:400;width:1000px;text-align:center;">I</div>
<div style="left:1337.00px;top:210.79px;font-size:26px;line-height:26px;color:#222;font-weight:400;width:1000px;text-align:center;">J</div>
<div style="left:-473.50px;top:248.99px;font-size:26px;line-height:26px;color:#222;font-weight:400;letter-spacing:-1px;width:1000px;text-align:center;">1</div>
<div style="left:-473.50px;top:288.99px;font-size:26px;line-height:26px;color:#222;font-weight:400;letter-spacing:-1px;width:1000px;text-align:center;">2</div>
<div style="left:-473.50px;top:328.99px;font-size:26px;line-height:26px;color:#3d6e55;font-weight:400;letter-spacing:-1px;width:1000px;text-align:center;">3</div>
<div style="left:-473.50px;top:368.99px;font-size:26px;line-height:26px;color:#222;font-weight:400;letter-spacing:-1px;width:1000px;text-align:center;">4</div>
<div style="left:-473.50px;top:408.99px;font-size:26px;line-height:26px;color:#222;font-weight:400;letter-spacing:-1px;width:1000px;text-align:center;">5</div>
<div style="left:-473.50px;top:448.99px;font-size:26px;line-height:26px;color:#222;font-weight:400;letter-spacing:-1px;width:1000px;text-align:center;">6</div>
<div style="left:-473.50px;top:488.99px;font-size:26px;line-height:26px;color:#222;font-weight:400;letter-spacing:-1px;width:1000px;text-align:center;">7</div>
<div style="left:-473.50px;top:528.99px;font-size:26px;line-height:26px;color:#222;font-weight:400;letter-spacing:-1px;width:1000px;text-align:center;">8</div>
<div style="left:-473.50px;top:568.99px;font-size:26px;line-height:26px;color:#222;font-weight:400;letter-spacing:-1px;width:1000px;text-align:center;">9</div>
<div style="left:-472.50px;top:608.99px;font-size:26px;line-height:26px;color:#222;font-weight:400;letter-spacing:-1px;width:1000px;text-align:center;">10</div>
<div style="left:-472.50px;top:648.99px;font-size:26px;line-height:26px;color:#222;font-weight:400;letter-spacing:-1px;width:1000px;text-align:center;">11</div>
<div style="left:-472.50px;top:688.99px;font-size:26px;line-height:26px;color:#222;font-weight:400;letter-spacing:-1px;width:1000px;text-align:center;">12</div>
<div style="left:-472.50px;top:728.99px;font-size:26px;line-height:26px;color:#222;font-weight:400;letter-spacing:-1px;width:1000px;text-align:center;">13</div>
<div style="left:-472.50px;top:768.99px;font-size:26px;line-height:26px;color:#222;font-weight:400;letter-spacing:-1px;width:1000px;text-align:center;">14</div>
<div style="left:-472.50px;top:808.99px;font-size:26px;line-height:26px;color:#222;font-weight:400;letter-spacing:-1px;width:1000px;text-align:center;">15</div>
<div style="left:-472.50px;top:848.99px;font-size:26px;line-height:26px;color:#222;font-weight:400;letter-spacing:-1px;width:1000px;text-align:center;">16</div>
<div style="left:-472.50px;top:888.99px;font-size:26px;line-height:26px;color:#222;font-weight:400;letter-spacing:-1px;width:1000px;text-align:center;">17</div>
<div style="left:-472.50px;top:928.99px;font-size:26px;line-height:26px;color:#222;font-weight:400;letter-spacing:-1px;width:1000px;text-align:center;">18</div>
<div style="left:-472.50px;top:968.99px;font-size:26px;line-height:26px;color:#222;font-weight:400;letter-spacing:-1px;width:1000px;text-align:center;">19</div>
<div style="left:58.50px;top:250.21px;font-size:25.5px;line-height:25.5px;color:#111;font-weight:400;">€</div>
<div style="left:-790.00px;top:250.21px;font-size:25.5px;line-height:25.5px;color:#111;font-weight:400;letter-spacing:0.85px;width:1000px;text-align:right;">25,00</div>
<div style="left:58.50px;top:290.21px;font-size:25.5px;line-height:25.5px;color:#111;font-weight:400;">€</div>
<div style="left:-790.00px;top:290.21px;font-size:25.5px;line-height:25.5px;color:#111;font-weight:400;letter-spacing:0.85px;width:1000px;text-align:right;">3.345,00</div>
<div style="left:58.50px;top:330.21px;font-size:25.5px;line-height:25.5px;color:#111;font-weight:400;">€</div>
<div style="left:-790.00px;top:330.21px;font-size:25.5px;line-height:25.5px;color:#111;font-weight:400;letter-spacing:0.85px;width:1000px;text-align:right;">40,00</div>
<div style="left:58.50px;top:410.21px;font-size:25.5px;line-height:25.5px;color:#111;font-weight:400;">€</div>
<div style="left:-790.00px;top:410.21px;font-size:25.5px;line-height:25.5px;color:#111;font-weight:400;letter-spacing:0.85px;width:1000px;text-align:right;">3.410,00</div>
<div style="left:-498.00px;top:250.21px;font-size:25.5px;line-height:25.5px;color:#111;font-weight:400;letter-spacing:0.85px;width:1000px;text-align:right;">10,00 m²</div>
<div style="left:-498.00px;top:290.21px;font-size:25.5px;line-height:25.5px;color:#111;font-weight:400;letter-spacing:0.85px;width:1000px;text-align:right;">1.234,50 m²</div>
<div style="left:-498.00px;top:330.21px;font-size:25.5px;line-height:25.5px;color:#111;font-weight:400;letter-spacing:0.85px;width:1000px;text-align:right;">40,00 m²</div>
<div style="left:-498.00px;top:410.21px;font-size:25.5px;line-height:25.5px;color:#111;font-weight:400;letter-spacing:0.85px;width:1000px;text-align:right;">1.284,50 m²</div>
<div style="left:-206.00px;top:250.21px;font-size:25.5px;line-height:25.5px;color:#111;font-weight:400;letter-spacing:0.85px;width:1000px;text-align:right;">1,00 kg</div>
<div style="left:-206.00px;top:290.21px;font-size:25.5px;line-height:25.5px;color:#111;font-weight:400;letter-spacing:0.85px;width:1000px;text-align:right;">30,00 kg</div>
<div style="left:-206.00px;top:330.21px;font-size:25.5px;line-height:25.5px;color:#111;font-weight:400;letter-spacing:0.85px;width:1000px;text-align:right;">40,00 kg</div>
<div style="left:-206.00px;top:410.21px;font-size:25.5px;line-height:25.5px;color:#111;font-weight:400;letter-spacing:0.85px;width:1000px;text-align:right;">71,00 kg</div>
<div style="left:86.00px;top:250.21px;font-size:25.5px;line-height:25.5px;color:#111;font-weight:400;letter-spacing:0.85px;width:1000px;text-align:right;">1000</div>
<div style="left:1099.50px;top:250.21px;font-size:25.5px;line-height:25.5px;color:#111;font-weight:400;">g</div>
<div style="left:86.00px;top:290.21px;font-size:25.5px;line-height:25.5px;color:#111;font-weight:400;letter-spacing:0.85px;width:1000px;text-align:right;">30000</div>
<div style="left:1099.50px;top:290.21px;font-size:25.5px;line-height:25.5px;color:#111;font-weight:400;">g</div>
<div style="left:86.00px;top:330.21px;font-size:25.5px;line-height:25.5px;color:#111;font-weight:400;letter-spacing:0.85px;width:1000px;text-align:right;">40000</div>
<div style="left:1099.50px;top:330.21px;font-size:25.5px;line-height:25.5px;color:#111;font-weight:400;">g</div>
<div style="left:86.00px;top:370.21px;font-size:25.5px;line-height:25.5px;color:#111;font-weight:400;letter-spacing:0.85px;width:1000px;text-align:right;">0</div>
<div style="left:1099.50px;top:370.21px;font-size:25.5px;line-height:25.5px;color:#111;font-weight:400;">g</div>
<div style="left:86.00px;top:410.21px;font-size:25.5px;line-height:25.5px;color:#111;font-weight:400;letter-spacing:0.85px;width:1000px;text-align:right;">71000</div>
<div style="left:1099.50px;top:410.21px;font-size:25.5px;line-height:25.5px;color:#111;font-weight:400;">g</div>
<div style="left:274.00px;top:250.21px;font-size:25.5px;line-height:25.5px;color:#111;font-weight:400;letter-spacing:0.85px;width:1000px;text-align:right;">107,639104</div>
<div style="left:274.00px;top:290.21px;font-size:25.5px;line-height:25.5px;color:#111;font-weight:400;letter-spacing:0.85px;width:1000px;text-align:right;">13288,0474</div>
<div style="left:274.00px;top:330.21px;font-size:25.5px;line-height:25.5px;color:#111;font-weight:400;letter-spacing:0.85px;width:1000px;text-align:right;">430,556417</div>
<div style="left:274.00px;top:370.21px;font-size:25.5px;line-height:25.5px;color:#111;font-weight:400;letter-spacing:0.85px;width:1000px;text-align:right;">0</div>
<div style="left:274.00px;top:410.21px;font-size:25.5px;line-height:25.5px;color:#111;font-weight:400;letter-spacing:0.85px;width:1000px;text-align:right;">13826,2429</div>
<div style="left:52px;top:319px;width:163px;height:43px;border:2px solid #4b7862;box-sizing:border-box"></div>
<div style="left:210.5px;top:357.5px;width:6px;height:6px;background:#4b7862;border:1px solid #fff;box-sizing:border-box"></div>
<svg style="position:absolute;left:60px;top:350px;" width="30" height="36" viewBox="0 0 30 36"><path d="M15.5 6.5L12.3 10H18.7z M7 15.5L10.5 12.3V18.7z M24 15.5L20.5 12.3V18.7z" fill="#000"/><path d="M15.5 9.5V13M10 15.5h2.5M18.5 15.5H21" stroke="#000" stroke-width="1.2"/><path d="M15.5 15V30l3.5-3.5 3.5 7 2.4-1.2-3.4-6.8H26z" fill="#fff" stroke="#000" stroke-width="1.1" stroke-linejoin="round"/></svg>
<div style="left:1899px;top:203px;width:21px;height:798px;background:#e3e3e3"></div>
<div style="left:1902px;top:205px;width:15px;height:16px;background:#fff;border:1px solid #c2c2c2;box-sizing:border-box"></div>
<svg style="position:absolute;left:1906px;top:211px;" width="8" height="4" viewBox="0 0 8 4"><path d="M0 4h8L4 0z" fill="#666"/></svg>
<div style="left:1902px;top:220px;width:15px;height:727px;background:#fff;border:1px solid #aaa;box-sizing:border-box"></div>
<div style="left:1902px;top:947px;width:15px;height:40px;background:#d4d4d4"></div>
<div style="left:1902px;top:987px;width:15px;height:14px;background:#fff;border:1px solid #c2c2c2;box-sizing:border-box"></div>
<svg style="position:absolute;left:1906px;top:992px;" width="8" height="4" viewBox="0 0 8 4"><path d="M0 0h8L4 4z" fill="#666"/></svg>
<div style="left:0px;top:1001px;width:1920px;height:28px;background:#e3e3e3"></div>
<div style="left:0px;top:1000px;width:1898px;height:1.5px;background:#b4b4b4"></div>
<svg style="position:absolute;left:27px;top:1011px;" width="5" height="8" viewBox="0 0 5 8"><path d="M4 0.5v7L0.5 4z" fill="#c4c4c4"/></svg>
<svg style="position:absolute;left:55px;top:1011px;" width="5" height="8" viewBox="0 0 5 8"><path d="M0.5 0.5v7L4 4z" fill="#c4c4c4"/></svg>
<div style="left:100px;top:1000px;width:76px;height:26px;background:#fff;border-left:1px solid #c8c8c8;border-right:1px solid #c8c8c8;box-sizing:border-box"></div>
<div style="left:100px;top:1024px;width:76px;height:2px;background:#3a7551"></div>
<div style="left:112.00px;top:1007.50px;font-size:13px;line-height:13px;color:#2f6e46;font-weight:700;">Tabelle1</div>
<svg style="position:absolute;left:208px;top:1006px;" width="18" height="18" viewBox="0 0 18 18"><circle cx="9" cy="9" r="7.8" fill="none" stroke="#666" stroke-width="1.2"/><path d="M9 4.5v9M4.5 9h9" stroke="#555" stroke-width="1.6"/></svg>
<div style="left:1152px;top:1009.5px;width:2px;height:2px;background:#aaa"></div>
<div style="left:1152px;top:1013.5px;width:2px;height:2px;background:#aaa"></div>
<div style="left:1152px;top:1017.5px;width:2px;height:2px;background:#aaa"></div>
<div style="left:1169px;top:1008px;width:16px;height:15px;background:#fff;border:1px solid #9a9a9a;box-sizing:border-box"></div>
<svg style="position:absolute;left:1174px;top:1012px;" width="5" height="8" viewBox="0 0 5 8"><path d="M5 0v8L0 4z" fill="#555"/></svg>
<div style="left:1184px;top:1008px;width:623px;height:15px;background:#fff;border:1px solid #a0a0a0;box-sizing:border-box"></div>
<div style="left:1807px;top:1009px;width:79px;height:13px;background:#d6d6d6"></div>
<div style="left:1886px;top:1008px;width:15px;height:15px;background:#fff;border:1px solid #b0b0b0;box-sizing:border-box"></div>
<svg style="position:absolute;left:1892px;top:1012px;" width="5" height="8" viewBox="0 0 5 8"><path d="M0 0v8l5-4z" fill="#555"/></svg>
<div style="left:0px;top:1028px;width:1920px;height:1px;background:#d0d0d0"></div>
<div style="left:0px;top:1029px;width:1920px;height:22px;background:#f1f1f1"></div>
<div class="u" style="left:8.00px;top:1033.99px;font-size:11px;line-height:11px;color:#444;font-weight:400;">Bereit</div>
<div style="left:1632px;top:1029px;width:37px;height:22px;background:#c8c8c8"></div>
<svg style="position:absolute;left:1643px;top:1032px;" width="14" height="14" viewBox="0 0 14 14"><rect x="0.5" y="0.5" width="13" height="13" fill="#777"/><path d="M4.5 0.5v13M9 0.5v13M0.5 4.5h13M0.5 9h13" stroke="#c8c8c8" stroke-width="1"/></svg>
<svg style="position:absolute;left:1681px;top:1032px;" width="15" height="14" viewBox="0 0 15 14"><rect x="0.5" y="0.5" width="14" height="13" fill="none" stroke="#777" stroke-width="1.1"/><rect x="4" y="2.5" width="7" height="9" fill="none" stroke="#777" stroke-width="1"/><path d="M5.5 5h4M5.5 7h4M5.5 9h4" stroke="#777" stroke-width="0.8"/></svg>
<svg style="position:absolute;left:1719px;top:1032px;" width="15" height="14" viewBox="0 0 15 14"><rect x="0.5" y="0.5" width="14" height="13" fill="none" stroke="#777" stroke-width="1.1"/><path d="M0.5 8.5h6v-8M6.5 8.5V0.5M9.5 0.5v8h5" fill="none" stroke="#777" stroke-width="1.1"/></svg>
<div style="left:1750px;top:1039px;width:6px;height:2px;background:#555"></div>
<div style="left:1760px;top:1039px;width:101px;height:1px;background:#b8b8b8"></div>
<div style="left:1810px;top:1036px;width:1px;height:5px;background:#b8b8b8"></div>
<div style="left:1824px;top:1033px;width:6px;height:11px;background:#666"></div>
<svg style="position:absolute;left:1863px;top:1035px;" width="8" height="8" viewBox="0 0 8 8"><path d="M4 0v8M0 4h8" stroke="#555" stroke-width="1.6"/></svg>
<div class="u" style="left:1882.50px;top:1033.44px;font-size:10.7px;line-height:10.7px;color:#444;font-weight:400;">200 %</div>
<div style="left:0px;top:1051px;width:1920px;height:29px;background:#07121c"></div>
<svg style="position:absolute;left:9px;top:1056px;" width="18" height="18" viewBox="0 0 18 18"><path d="M0.5 2.6L7.2 1.6V8.3H0.5zM8.3 1.4L17.5 0v8.3H8.3zM0.5 9.5H7.2v6.9L0.5 15.4zM8.3 9.5h9.2V18l-9.2-1.4z" fill="#fff"/></svg>
<svg style="position:absolute;left:48px;top:1058px;" width="18" height="15" viewBox="0 0 18 15"><path d="M1 1.5h6l1.5 2H17v10.5H1z" fill="#f4dc72"/><path d="M1 4.5h16" stroke="#e5c65a" stroke-width="1"/><rect x="6" y="9.5" width="6" height="4.5" fill="#4a9ad8"/><rect x="7.5" y="11" width="3" height="3" fill="#f4dc72"/></svg>
<svg style="position:absolute;left:86px;top:1060px;" width="16" height="11" viewBox="0 0 16 11"><rect x="0.5" y="0.5" width="15" height="10" rx="1" fill="#5f7fc4" stroke="#9fb2e0"/><path d="M2.5 3h11M2.5 5.5h11" stroke="#dfe6f7" stroke-width="1" stroke-dasharray="1.2 0.8"/><path d="M4 8h8" stroke="#dfe6f7" stroke-width="1.2"/></svg>
<div style="left:112px;top:1051px;width:37px;height:29px;background:#1d2a35"></div>
<div style="left:112px;top:1078px;width:37px;height:2px;background:#8ea4bf"></div>
<svg style="position:absolute;left:123px;top:1058px;" width="16" height="15" viewBox="0 0 16 15"><rect x="7" y="1" width="8.5" height="13" fill="#fff" stroke="#aaa" stroke-width="0.5"/><path d="M8.5 3.5h6M8.5 6h6M8.5 8.5h6M8.5 11h6" stroke="#7a9a80" stroke-width="0.9"/><rect x="0" y="1.5" width="10" height="12" fill="#217346"/><path d="M2.5 4l5 7M7.5 4l-5 7" stroke="#fff" stroke-width="1.7"/></svg>
<svg style="position:absolute;left:1872px;top:1061px;" width="14" height="9" viewBox="0 0 14 9"><path d="M1 8l6-6.5L13 8" fill="none" stroke="#c8ccd0" stroke-width="1.3"/></svg>
<svg style="position:absolute;left:1895px;top:1058px;" width="18" height="15" viewBox="0 0 18 15"><path d="M1.5 5h3l4-4v13l-4-4h-3z" fill="none" stroke="#d0d4d8" stroke-width="1.1"/><path d="M10.5 5a3.5 3.5 0 0 1 0 5M12.5 3a6 6 0 0 1 0 9M14.5 1a9 9 0 0 1 0 13" fill="none" stroke="#c0c4c8" stroke-width="1.1"/></svg>
<div style="left:1915px;top:1051px;width:1px;height:29px;background:#3a4652"></div>
</body></html>
